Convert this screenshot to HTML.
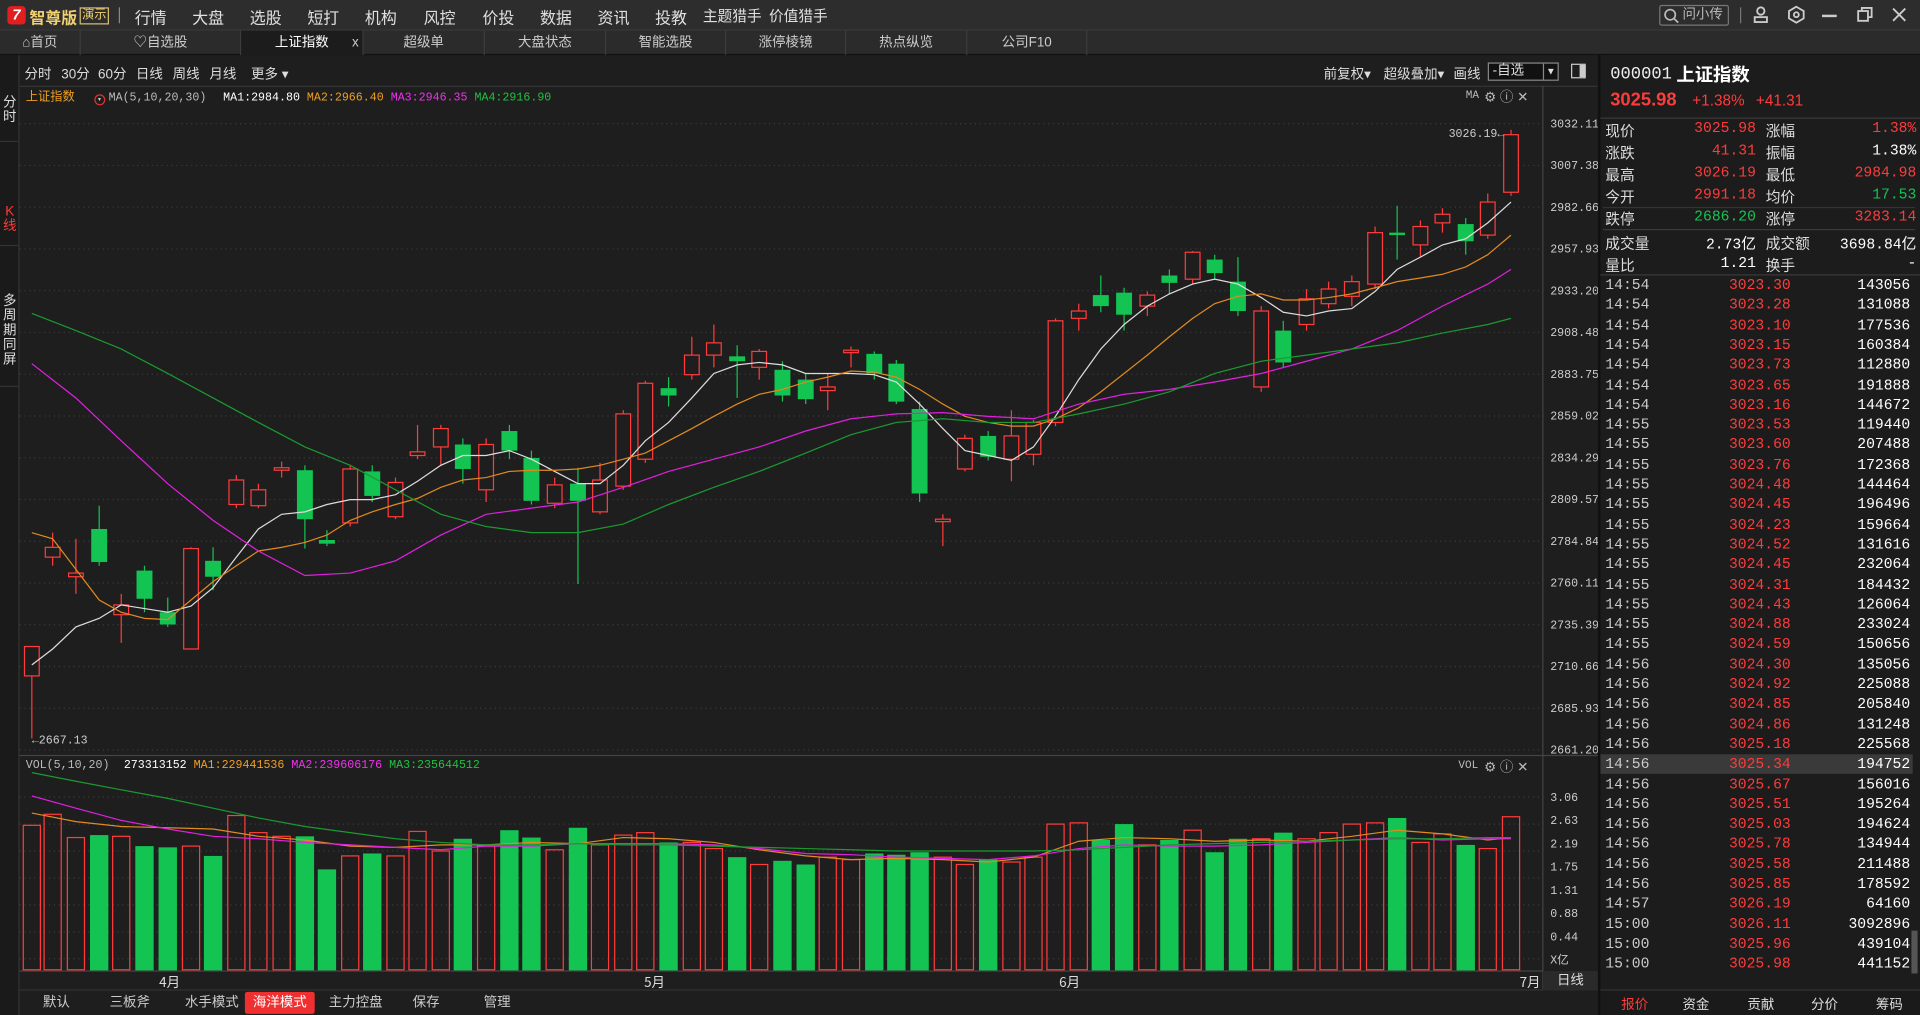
<!DOCTYPE html>
<html><head><meta charset="utf-8">
<style>
*{margin:0;padding:0;box-sizing:border-box}
html,body{width:1920px;height:1015px;overflow:hidden;background:#1c1c1c}
#w{width:1568px;height:829px;transform:scale(1.22449);transform-origin:0 0;position:relative;font-family:"Liberation Sans","Noto Sans CJK SC",sans-serif;color:#ddd;font-size:12px;background:#1e1e1e}
.abs{position:absolute}
.mono{font-family:"Liberation Mono","Noto Sans CJK SC",monospace}
#top{left:0;top:0;width:1568px;height:25px;background:#2d2d2d;border-bottom:1px solid #3a3a3a}
#top .m{position:absolute;top:4px;font-size:13px;color:#e0e0e0;white-space:nowrap}
#tabs{left:0;top:25px;width:1568px;height:20px;background:#2b2b2b;border-bottom:1px solid #111}
.tab{position:absolute;top:0;height:20px;line-height:20px;text-align:center;font-size:11px;color:#ccc;border-right:1px solid #3c3c3c;white-space:nowrap}
#left{left:0;top:45px;width:16px;height:784px;background:#1a1a1a;border-right:1px solid #333}
#left div{position:absolute;left:2px;width:12px;font-size:11px;line-height:12px;color:#ddd;text-align:center}
#rp{left:1305px;top:45px;width:263px;height:784px;background:#1c1c1c;border-left:2px solid #111}
.q{position:absolute;font-size:12px;white-space:nowrap}
.row{position:absolute;left:0;width:255px;height:16px;font-size:12px;line-height:16px}
.row span{position:absolute}
#bt div{position:absolute;top:0;height:18px;line-height:18px;font-size:11px;color:#ccc;text-align:center;white-space:nowrap}
.tb{position:absolute;white-space:nowrap}
</style></head><body>
<div id="w">
<div id="top" class="abs">
 <div class="abs" style="left:6px;top:5px;width:15px;height:15px;background:#e02020;border-radius:3px;color:#fff;font-weight:bold;font-size:12px;line-height:15px;text-align:center;font-style:italic">7</div>
 <div class="m" style="left:24px;top:4px;font-weight:bold;color:#f0d070">智尊版</div>
 <div class="abs" style="left:65px;top:6px;border:1px solid #d8c070;color:#f0d070;font-size:10px;line-height:12px;padding:0 1px">演示</div>
 <div class="abs" style="left:97px;top:6px;width:1px;height:13px;background:#888"></div>
 <div class="m" style="left:110px">行情</div><div class="m" style="left:157px">大盘</div><div class="m" style="left:204px">选股</div><div class="m" style="left:251px">短打</div><div class="m" style="left:298px">机构</div><div class="m" style="left:346px">风控</div><div class="m" style="left:394px">价投</div><div class="m" style="left:441px">数据</div><div class="m" style="left:488px">资讯</div><div class="m" style="left:535px">投教</div><div class="m" style="left:574px;font-size:12px">主题猎手</div><div class="m" style="left:628px;font-size:12px">价值猎手</div>
 <div class="abs" style="left:1355px;top:4px;width:57px;height:17px;border:1px solid #777;border-radius:2px;font-size:11px;color:#bbb;line-height:15px;padding-left:18px;white-space:nowrap">问小传</div>
 <svg class="abs" style="left:1358px;top:6px" width="14" height="14"><circle cx="6" cy="6" r="4.2" fill="none" stroke="#bbb" stroke-width="1.4"/><line x1="9" y1="9" x2="12.5" y2="12.5" stroke="#bbb" stroke-width="1.4"/></svg>
 <div class="abs" style="left:1421px;top:6px;width:1px;height:13px;background:#777"></div>
 <svg class="abs" style="left:1430px;top:4px" width="16" height="16"><circle cx="8" cy="5" r="3" fill="none" stroke="#ccc" stroke-width="1.5"/><rect x="3" y="10" width="10" height="4" fill="none" stroke="#ccc" stroke-width="1.5"/></svg>
 <svg class="abs" style="left:1459px;top:4px" width="16" height="16"><polygon points="8,1.5 14,5 14,11 8,14.5 2,11 2,5" fill="none" stroke="#ccc" stroke-width="1.5"/><circle cx="8" cy="8" r="2" fill="none" stroke="#ccc" stroke-width="1.5"/></svg>
 <div class="abs" style="left:1488px;top:12px;width:12px;height:2px;background:#ccc"></div>
 <svg class="abs" style="left:1516px;top:5px" width="14" height="14"><rect x="1.5" y="4" width="8" height="8" fill="none" stroke="#ccc" stroke-width="1.5"/><polyline points="4.5,4 4.5,1.5 12.5,1.5 12.5,9 9.5,9" fill="none" stroke="#ccc" stroke-width="1.5"/></svg>
 <svg class="abs" style="left:1545px;top:6px" width="12" height="12"><path d="M1 1L11 11M11 1L1 11" stroke="#ccc" stroke-width="1.5"/></svg>
</div>
<div id="tabs" class="abs">
 <div class="tab" style="left:0;width:66px">⌂首页</div>
 <div class="tab" style="left:66px;width:131px">♡自选股</div>
 <div class="tab" style="left:197px;width:100px;background:#1c1c1c;color:#fff">上证指数 <span style="position:absolute;right:3px;color:#ccc">x</span></div>
 <div class="tab" style="left:297px;width:99px">超级单</div>
 <div class="tab" style="left:396px;width:99px">大盘状态</div>
 <div class="tab" style="left:495px;width:98px">智能选股</div>
 <div class="tab" style="left:593px;width:98px">涨停棱镜</div>
 <div class="tab" style="left:691px;width:99px">热点纵览</div>
 <div class="tab" style="left:790px;width:98px">公司F10</div>
</div>
<div id="left" class="abs">
 <div style="top:33px">分<br>时</div>
 <div style="top:122px;color:#ff3b3b">K<br>线</div>
 <div style="top:195px">多<br>周<br>期<br>同<br>屏</div>
 <div style="top:70px;left:0;width:16px;height:1px;background:#333"></div>
 <div style="top:155px;left:0;width:16px;height:1px;background:#333"></div>
 <div style="top:270px;left:0;width:16px;height:1px;background:#333"></div>
</div>
<!-- toolbar -->
<div class="abs" style="left:20px;top:52px;width:260px;height:14px;font-size:11px;color:#ddd">
 <span class="tb" style="left:0">分时</span><span class="tb" style="left:30px">30分</span><span class="tb" style="left:60px">60分</span><span class="tb" style="left:91px">日线</span><span class="tb" style="left:121px">周线</span><span class="tb" style="left:151px">月线</span><span class="tb" style="left:185px">更多 ▾</span>
</div>
<div class="abs" style="left:1081px;top:52px;font-size:11px;white-space:nowrap">前复权▾</div>
<div class="abs" style="left:1130px;top:52px;font-size:11px;white-space:nowrap">超级叠加▾</div>
<div class="abs" style="left:1187px;top:52px;font-size:11px;white-space:nowrap">画线</div>
<div class="abs" style="left:1215px;top:51px;width:58px;height:15px;border:1px solid #888;font-size:11px;line-height:13px;padding-left:3px;background:#111;white-space:nowrap">-自选<span style="position:absolute;right:0;top:0;width:12px;height:13px;border-left:1px solid #888;text-align:center;font-size:8px">▼</span></div>
<div class="abs" style="left:1283px;top:52px;width:12px;height:12px;border:1px solid #ccc"><div style="position:absolute;left:6px;top:0;width:5px;height:10px;background:#ccc"></div></div>
<div class="abs" style="left:16px;top:70px;width:1289px;height:1px;background:#333"></div>
<!-- legend -->
<div class="abs mono" style="left:21px;top:72px;font-size:9.5px;white-space:nowrap;line-height:12px">
 <span style="color:#f0a020;font-family:'Noto Sans CJK SC';font-size:10px">上证指数</span>
 <span style="display:inline-block;width:9px;height:9px;border:1px solid #e03030;border-radius:50%;margin:0 3px 0 10px;font-size:6px;text-align:center;line-height:8px;vertical-align:-1px">▾</span><span style="color:#bbb">MA(5,10,20,30)</span>
 <span style="color:#fff;margin-left:8px">MA1:2984.80</span> <span style="color:#f0a020">MA2:2966.40</span> <span style="color:#f030f0">MA3:2946.35</span> <span style="color:#20c040">MA4:2916.90</span>
</div>
<div class="abs mono" style="left:1197px;top:73px;font-size:9px;color:#bbb">MA</div>
<div class="abs" style="left:1212px;top:71px;font-size:11px;color:#bbb;white-space:nowrap">⚙ ⓘ ✕</div>
<div class="abs mono" style="left:21px;top:619px;font-size:9.5px;white-space:nowrap">
 <span style="color:#bbb">VOL(5,10,20)</span> <span style="color:#fff;margin-left:6px">273313152</span> <span style="color:#f0a020">MA1:229441536</span> <span style="color:#f030f0">MA2:239606176</span> <span style="color:#20c040">MA3:235644512</span>
</div>
<div class="abs mono" style="left:1191px;top:620px;font-size:9px;color:#bbb">VOL</div>
<div class="abs" style="left:1212px;top:618px;font-size:11px;color:#bbb;white-space:nowrap">⚙ ⓘ ✕</div>

<svg id="ch" class="abs" style="left:0;top:0" width="1305" height="829"></svg>

<div class="abs" style="left:16px;top:808px;width:1244px;height:1px;background:#333"></div>
<div class="abs" style="left:1260px;top:793px;width:45px;height:16px;background:#2a2a2a;font-size:11px;line-height:16px;text-align:center">日线</div>
<div id="bt" class="abs" style="left:16px;top:810px;width:1289px;height:19px;background:#1e1e1e">
 <div style="left:10px;width:40px">默认</div><div style="left:70px;width:40px">三板斧</div><div style="left:127px;width:60px">水手模式</div>
 <div style="left:184px;width:57px;background:#f03030;color:#fff;border-radius:2px">海洋模式</div>
 <div style="left:247px;width:55px">主力控盘</div><div style="left:312px;width:40px">保存</div><div style="left:370px;width:40px">管理</div>
</div>

<div id="rp" class="abs">
 <div class="abs mono" style="left:8px;top:8px;font-size:14px;color:#eee">000001</div>
 <div class="abs" style="left:62px;top:5px;font-size:15px;font-weight:bold;color:#fff;white-space:nowrap">上证指数</div>
 <div class="abs" style="left:8px;top:28px;font-size:15px;font-weight:bold;color:#ff3b3b">3025.98</div>
 <div class="abs" style="left:75px;top:30px;font-size:12.5px;color:#ff3b3b">+1.38%</div>
 <div class="abs" style="left:127px;top:30px;font-size:12.5px;color:#ff3b3b">+41.31</div>
 <div class="abs" style="left:0;top:51px;width:261px;height:1px;background:#3a3a3a"></div>
 <div id="qt"></div>
 <div class="abs" style="left:0;top:179px;width:261px;height:1px;background:#3a3a3a"></div>
 <div id="tl"></div>
 <div class="abs" style="left:254px;top:715px;width:5px;height:35px;background:#555"></div>
 <div class="abs" style="left:0;top:763px;width:261px;height:21px;background:#1a1a1a;border-top:1px solid #333;font-size:11px;white-space:nowrap">
  <span class="abs" style="left:17px;top:3px;color:#ff3b3b">报价</span><span class="abs" style="left:67px;top:3px">资金</span><span class="abs" style="left:120px;top:3px">贡献</span><span class="abs" style="left:172px;top:3px">分价</span><span class="abs" style="left:225px;top:3px">筹码</span>
 </div>
</div>
</div>
<script>
var R='#ff3b3b',G='#13c452',W='#fff';
var q=[["现价","3025.98",R,"涨幅","1.38%",R],["涨跌","41.31",R,"振幅","1.38%",W],["最高","3026.19",R,"最低","2984.98",R],["今开","2991.18",R,"均价","17.53",G],["跌停","2686.20",G,"涨停","3283.14",R],["成交量","2.73亿",W,"成交额","3698.84亿",W],["量比","1.21",W,"换手","-",W]];
var ys=[53,71,89,107,125,145,163],h='';
q.forEach(function(r,i){var y=ys[i];h+='<div class="q" style="left:4px;top:'+y+'px">'+r[0]+'</div><div class="q mono" style="left:30px;width:97px;text-align:right;top:'+y+'px;color:'+r[2]+'">'+r[1]+'</div><div class="q" style="left:135px;top:'+y+'px">'+r[3]+'</div><div class="q mono" style="left:150px;width:108px;text-align:right;top:'+y+'px;color:'+r[5]+'">'+r[4]+'</div>';});
h+='<div class="abs" style="left:2px;top:142px;width:255px;height:1px;background:#3a3a3a"></div><div class="abs" style="left:2px;top:124px;width:255px;height:1px;background:#333"></div>';
document.getElementById('qt').innerHTML=h;
var t="14:54 3023.30 143056|14:54 3023.28 131088|14:54 3023.10 177536|14:54 3023.15 160384|14:54 3023.73 112880|14:54 3023.65 191888|14:54 3023.16 144672|14:55 3023.53 119440|14:55 3023.60 207488|14:55 3023.76 172368|14:55 3024.48 144464|14:55 3024.45 196496|14:55 3024.23 159664|14:55 3024.52 131616|14:55 3024.45 232064|14:55 3024.31 184432|14:55 3024.43 126064|14:55 3024.88 233024|14:55 3024.59 150656|14:56 3024.30 135056|14:56 3024.92 225088|14:56 3024.85 205840|14:56 3024.86 131248|14:56 3025.18 225568|14:56 3025.34 194752|14:56 3025.67 156016|14:56 3025.51 195264|14:56 3025.03 194624|14:56 3025.78 134944|14:56 3025.58 211488|14:56 3025.85 178592|14:57 3026.19 64160|15:00 3026.11 3092896|15:00 3025.96 439104|15:00 3025.98 441152".split('|');
h='';t.forEach(function(s,i){var p=s.split(' '),y=180+i*16.3;h+='<div class="row mono" style="top:'+y+'px;'+(i==24?'background:#3a3a3a;':'')+'"><span style="left:4px;color:#ccc">'+p[0]+'</span><span style="left:105px;color:'+R+'">'+p[1]+'</span><span style="right:2px;color:#fff">'+p[2]+'</span></div>';});
document.getElementById('tl').innerHTML=h;
var c=[[26,552,528,528,603],[43,455,447,435,462],[62,471,468,440,485],[81,432,459,413,462],[99,502,494,485,525],[118,466,489,462,500],[137,500,510,488,512],[156,530,448,447,530],[174,458,471,447,482],[193,412,392,388,415],[211,413,400,395,415],[230,384,382,377,390],[249,384,424,380,448],[267,441,444,433,446],[286,427,383,380,430],[304,385,405,380,410],[323,422,394,390,424],[341,372,369,347,375],[360,365,350,347,380],[378,363,383,358,395],[397,400,363,358,410],[416,352,368,347,375],[434,374,409,368,412],[453,411,396,390,415],[472,395,409,382,477],[490,418,392,378,420],[509,397,338,335,400],[527,375,313,311,378],[546,317,323,308,332],[565,306,290,275,310],[583,290,280,265,300],[602,291,295,282,325],[620,300,287,285,310],[639,302,323,295,328],[658,310,326,305,330],[676,319,316,305,335],[695,288,286,283,300],[714,289,305,287,310],[732,297,328,294,330],[751,334,403,328,410],[770,426,424,420,446],[788,383,358,355,385],[807,356,373,352,376],[826,375,356,335,393],[844,371,345,343,380],[862,345,262,260,348],[881,260,254,248,270],[899,241,250,225,255],[918,239,257,235,270],[937,250,241,238,258],[955,225,231,220,240],[974,228,206,205,232],[992,212,223,208,228],[1011,230,254,210,258],[1030,316,254,250,320],[1048,270,296,262,300],[1067,265,244,236,270],[1085,248,236,230,252],[1104,242,230,225,250],[1123,232,190,185,236],[1141,190,192,168,212],[1160,200,185,180,210],[1178,182,175,170,190],[1197,183,197,178,208],[1215,192,165,158,195],[1234,157,110,106,160]];
var v=[674,665,684,682,683,691,692,691,699,666,680,683,683,710,699,697,699,679,695,685,691,678,684,694,676,690,682,680,688,688,693,700,706,703,706,700,702,697,698,696,700,706,702,704,700,673,672,686,673,690,686,678,696,685,685,680,685,680,673,672,668,688,681,690,693,667];
var s='';
for(var y=101;y<=613;y+=34.1)s+='<line x1="16" x2="1260" y1="'+y+'" y2="'+y+'" stroke="#3a3a3a" stroke-dasharray="1,3"/>';
[651,673,695,717,739,761,783].forEach(function(y){s+='<line x1="16" x2="1260" y1="'+y+'" y2="'+y+'" stroke="#3a3a3a" stroke-dasharray="1,3"/>';});
s+='<line x1="16" x2="1305" y1="617" y2="617" stroke="#444"/><line x1="16" x2="1260" y1="793" y2="793" stroke="#444"/><line x1="1260" x2="1260" y1="70" y2="808" stroke="#444"/>';
var pl=["3032.11","3007.38","2982.66","2957.93","2933.20","2908.48","2883.75","2859.02","2834.29","2809.57","2784.84","2760.11","2735.39","2710.66","2685.93","2661.20"];
pl.forEach(function(p,i){s+='<text x="1266" y="'+(104+i*34.1)+'" fill="#ccc" font-size="9.5" font-family="Liberation Mono">'+p+'</text>';});
["3.06","2.63","2.19","1.75","1.31","0.88","0.44","X亿"].forEach(function(p,i){s+='<text x="1266" y="'+(654+i*19)+'" fill="#ccc" font-size="9.5" font-family="Liberation Mono,Noto Sans CJK SC">'+p+'</text>';});
c.forEach(function(k,i){var x=k[0],o=k[1],cl=k[2],hi=k[3],lo=k[4],up=cl<=o,col=up?R:G,top=Math.min(o,cl),bh=Math.max(Math.abs(o-cl),1.5);
 s+='<line x1="'+x+'" x2="'+x+'" y1="'+hi+'" y2="'+lo+'" stroke="'+col+'"/>';
 s+=up?'<rect x="'+(x-6)+'" y="'+top+'" width="12" height="'+bh+'" fill="#1e1e1e" stroke="'+R+'"/>':'<rect x="'+(x-6.5)+'" y="'+top+'" width="13" height="'+bh+'" fill="'+G+'"/>';
 var vt=v[i];s+=up?'<rect x="'+(x-7)+'" y="'+vt+'" width="14" height="'+(792-vt)+'" fill="none" stroke="'+R+'"/>':'<rect x="'+(x-7.5)+'" y="'+vt+'" width="15" height="'+(792.5-vt)+'" fill="'+G+'"/>';
});
function pl2(pts,col){s+='<polyline fill="none" stroke="'+col+'" stroke-width="1" points="'+pts+'"/>';}
pl2("26,543 43,530 62,512 81,505 99,494 118,497 137,500 156,495 174,480 193,455 211,432 230,420 249,418 267,412 286,408 304,408 323,404 341,393 360,380 378,372 397,372 416,368 434,375 453,385 472,395 490,395 509,380 527,360 546,345 565,325 583,305 602,298 620,296 639,298 658,305 676,305 695,305 714,306 732,312 751,330 770,350 788,368 807,372 826,376 844,365 862,340 881,310 899,285 918,265 937,250 955,240 974,232 992,228 1011,232 1030,243 1048,255 1067,258 1085,254 1104,252 1123,238 1141,220 1160,210 1178,200 1197,195 1215,182 1234,165","#ddd");
pl2("26,435 43,440 62,465 81,490 99,500 118,505 137,506 156,490 174,475 193,462 211,450 230,447 249,443 267,437 286,425 304,418 323,412 341,407 360,398 378,392 397,390 416,385 434,384 453,384 472,383 490,380 509,375 527,370 546,360 565,350 583,340 602,330 620,322 639,318 658,312 676,308 695,303 714,304 732,308 751,318 770,330 788,340 807,345 826,348 844,348 862,342 881,333 899,320 918,305 937,290 955,275 974,260 992,248 1011,242 1030,240 1048,245 1067,245 1085,243 1104,240 1123,235 1141,230 1160,227 1178,224 1197,218 1215,208 1234,192","#e08a20");
pl2("26,297 62,325 99,360 137,395 174,425 211,450 249,470 286,468 323,458 360,437 397,420 434,415 472,410 509,398 546,385 583,375 620,365 658,352 695,342 732,338 770,337 807,340 844,342 881,330 918,322 955,318 992,312 1030,305 1067,295 1104,285 1141,270 1178,250 1215,232 1234,220","#e020e0");
pl2("26,256 62,270 99,285 137,305 174,325 211,345 249,365 286,380 323,400 360,420 397,430 434,435 472,435 509,428 546,412 583,398 620,385 658,370 695,355 732,345 770,342 807,345 844,345 881,338 918,330 955,320 992,305 1030,295 1067,290 1104,285 1141,280 1178,272 1215,265 1234,260","#1a9a30");
pl2("26,664 62,671 99,675 137,676 174,677 211,683 249,686 286,691 323,692 360,690 397,690 434,688 472,689 509,684 546,685 583,688 620,694 658,699 695,702 732,701 770,702 807,704 844,700 881,687 918,684 955,685 992,687 1030,686 1067,687 1104,683 1141,678 1178,681 1215,686 1234,684","#e08a20");
pl2("26,650 62,660 99,670 137,677 174,683 211,685 249,688 286,690 323,692 360,694 397,691 434,691 472,689 509,689 546,689 583,690 620,693 658,697 695,698 732,700 770,701 807,702 844,699 881,693 918,690 955,691 992,691 1030,690 1067,688 1104,686 1141,684 1178,686 1215,685 1234,685","#e020e0");
pl2("26,631 62,638 99,645 137,652 174,660 211,668 249,675 286,680 323,685 360,688 397,690 434,690 472,689 509,690 546,690 583,691 620,692 658,693 695,694 732,695 770,695 807,695 844,695 881,694 918,692 955,690 992,689 1030,688 1067,687 1104,686 1141,685 1178,685 1215,684 1234,684","#1a9a30");
s+='<text x="1183" y="112" fill="#ccc" font-size="9.5" font-family="Liberation Mono">3026.19←</text>';
s+='<text x="26" y="607" fill="#ccc" font-size="9.5" font-family="Liberation Mono">←2667.13</text>';
[["4月",137],["5月",533],["6月",872],["7月",1248]].forEach(function(m){s+='<text x="'+(m[1]-7)+'" y="806" fill="#ddd" font-size="11" font-family="Noto Sans CJK SC">'+m[0]+'</text>';});
document.getElementById('ch').innerHTML=s;
</script>
</body></html>
